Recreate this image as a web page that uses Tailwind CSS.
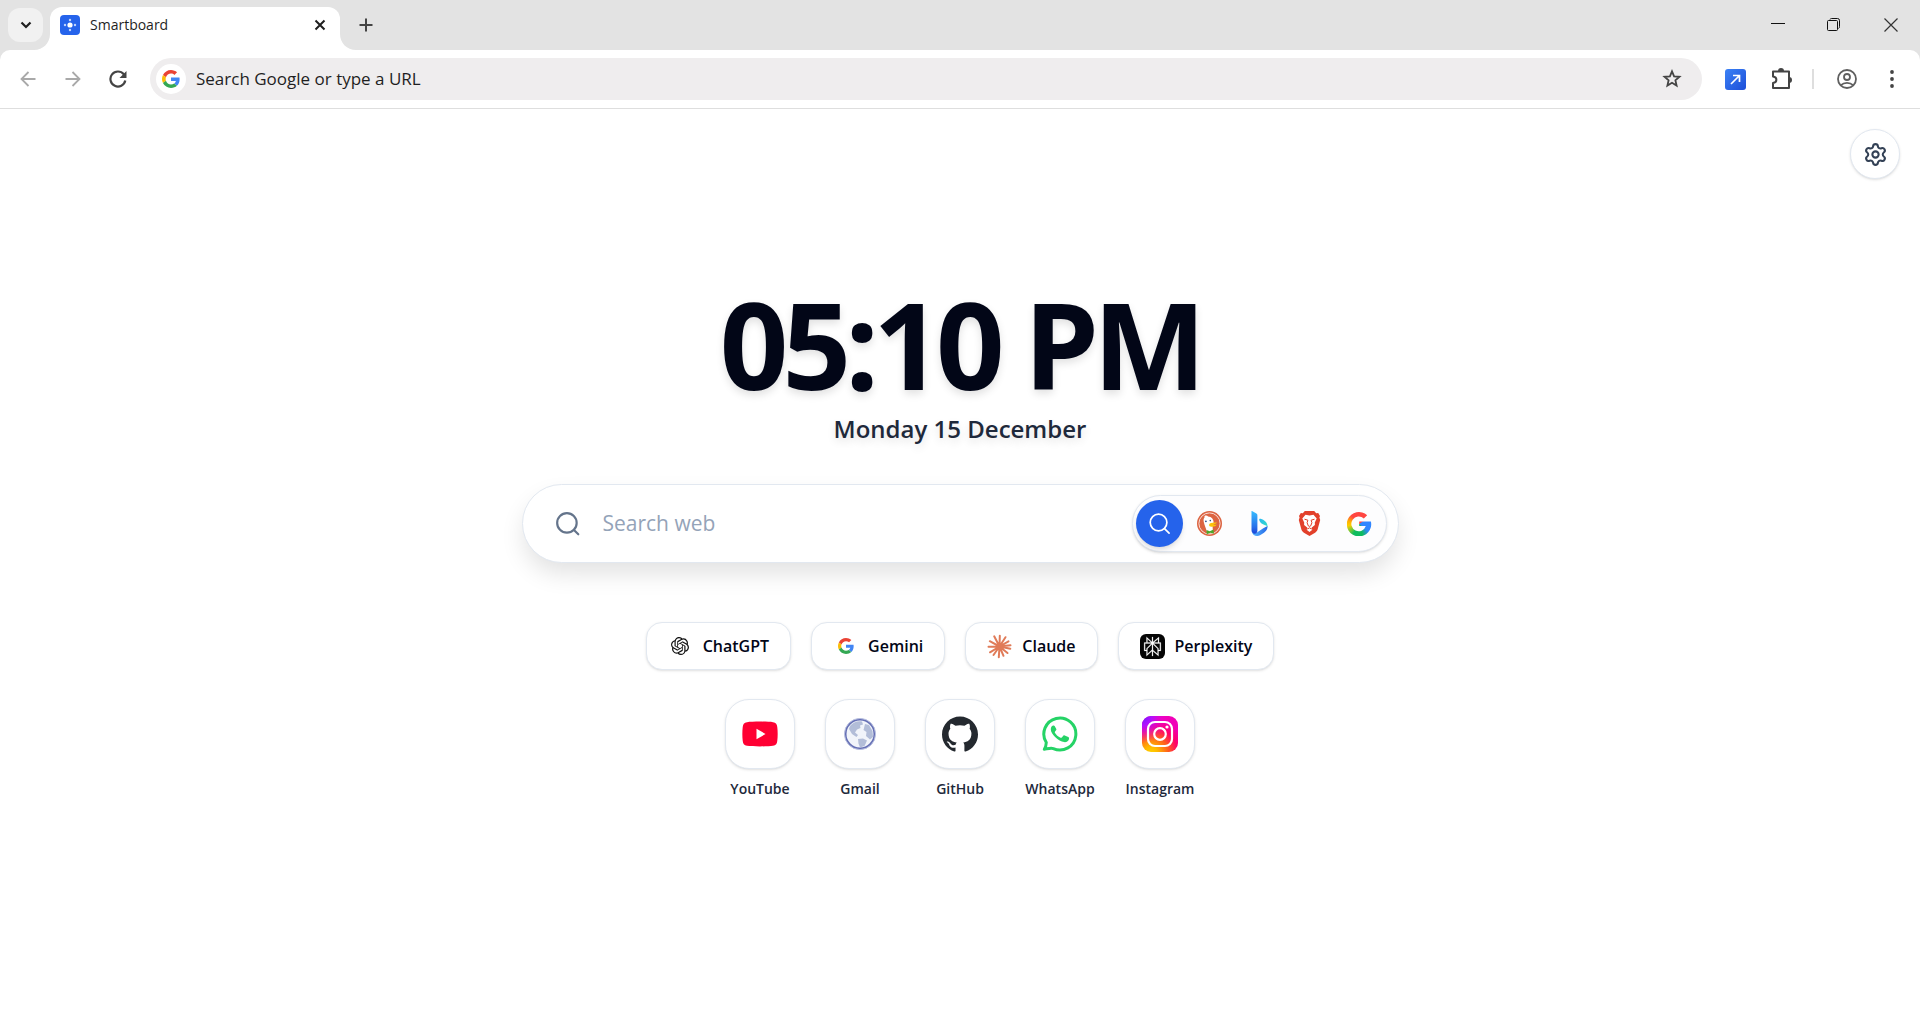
<!DOCTYPE html>
<html lang="en">

<head>
    <meta charset="UTF-8">
    <meta name="viewport" content="width=device-width, initial-scale=1.0">
    <title>Smartboard</title>
    <script src="https://cdn.jsdelivr.net/npm/@tailwindcss/browser@4"></script>
</head>

<body class="bg-white min-h-screen flex flex-col font-['Open_Sans','Noto_Sans',sans-serif]">
    <!-- Shared logo -->
    <svg class="hidden" aria-hidden="true">
        <symbol id="google" viewBox="0 0 48 48">
            <path fill="#EA4335" d="M24 9.5c3.54 0 6.71 1.22 9.21 3.6l6.85-6.85C35.9 2.38 30.47 0 24 0 14.62 0 6.51 5.38 2.56 13.22l7.98 6.19C12.43 13.72 17.74 9.5 24 9.5z" />
            <path fill="#4285F4" d="M46.98 24.55c0-1.57-.15-3.09-.38-4.55H24v9.02h12.94c-.58 2.96-2.26 5.48-4.78 7.18l7.73 6c4.51-4.18 7.09-10.36 7.09-17.65z" />
            <path fill="#FBBC05" d="M10.53 28.59c-.48-1.45-.76-2.99-.76-4.59s.27-3.14.76-4.59l-7.98-6.19C.92 16.46 0 20.12 0 24c0 3.88.92 7.54 2.56 10.78l7.97-6.19z" />
            <path fill="#34A853" d="M24 48c6.48 0 11.93-2.13 15.89-5.81l-7.73-6c-2.15 1.45-4.92 2.3-8.16 2.3-6.26 0-11.57-4.22-13.47-9.91l-7.98 6.19C6.51 42.62 14.62 48 24 48z" />
        </symbol>
    </svg>

    <header class="bg-[#e3e3e3]">
        <!-- Tab strip -->
        <div class="flex items-end h-[50px]">
            <div class="flex items-center h-full pl-2">
                <button aria-label="Search tabs" class="w-[35px] h-[34px] rounded-xl bg-[#f1f1f1] flex items-center justify-center">
                    <svg class="w-3 h-3" viewBox="0 0 12 12" fill="none" stroke="#1f1f1f" stroke-width="2.2"><path d="M1.5 3.5 6 8l4.500-4.500" /></svg>
                </button>
            </div>
            <svg class="w-4 h-4 -ml-[9px]" viewBox="0 0 16 16" fill="#fff"><path d="M16 0v16H0C9 16 16 9 16 0z" /></svg>
            <div class="w-[290px] h-[43px] bg-white rounded-t-xl flex items-center px-[10px] pb-[7px]">
                <svg class="w-5 h-5" viewBox="0 0 20 20">
                    <rect width="20" height="20" rx="4" fill="#2563eb" />
                    <circle cx="10" cy="10" r="2.600" fill="#fff" />
                    <g fill="#bfd3fb"><circle cx="10" cy="5" r="1.200" /><circle cx="10" cy="15" r="1.200" /><circle cx="5" cy="10" r="1.200" /><circle cx="15" cy="10" r="1.200" /></g>
                </svg>
                <span class="ml-[10px] text-sm text-[#1f1f1f]">Smartboard</span>
                <button aria-label="Close tab" class="ml-auto w-5 h-5 flex items-center justify-center">
                    <svg class="w-3 h-3" viewBox="0 0 12 12" fill="none" stroke="#1f1f1f" stroke-width="2"><path d="m1.500 1.500 9 9m0-9-9 9" /></svg>
                </button>
            </div>
            <svg class="w-4 h-4" viewBox="0 0 16 16" fill="#fff"><path d="M0 0v16h16C7 16 0 9 0 0z" /></svg>
            <button aria-label="New tab" class="h-full w-5 flex items-center justify-center">
                <svg class="w-[14px] h-[14px]" viewBox="0 0 14 14" fill="none" stroke="#444" stroke-width="2"><path d="M7 .5v13M.5 7h13" /></svg>
            </button>
            <div class="ml-auto h-full flex items-center">
                <button aria-label="Minimize" class="w-14 h-full flex items-center justify-center">
                    <svg class="w-[14px] h-[14px]" viewBox="0 0 14 14" fill="none" stroke="#111"><path d="M0 5.500h14" /></svg>
                </button>
                <button aria-label="Restore" class="w-14 h-full flex items-center justify-center">
                    <svg class="w-[14px] h-[14px]" viewBox="0 0 14 14" fill="none" stroke="#111"><rect x=".5" y="2.500" width="10" height="10" rx="1" /><path d="M3 1.500Q3.300.5 4.500.5H10.500q2 0 2 2v6q0 1.500-1 2" /></svg>
                </button>
                <button aria-label="Close" class="w-[58px] h-full flex items-center justify-center">
                    <svg class="w-[14px] h-[14px]" viewBox="0 0 14 14" fill="none" stroke="#333" stroke-width="1.200"><path d="m.5.5 13 13m0-13-13 13" /></svg>
                </button>
            </div>
        </div>

        <!-- Toolbar -->
        <div class="bg-white rounded-t-[10px] border-b border-[#dedede] h-[59px] flex items-center px-[18px]">
            <button aria-label="Back" class="w-5 h-5 flex items-center justify-center">
                <svg class="w-4 h-4" viewBox="0 0 16 16" fill="none" stroke="#a9a9a9" stroke-width="1.800"><path d="M15.500 8H2M8.500 1 1.500 8l7 7" /></svg>
            </button>
            <button aria-label="Forward" class="w-5 h-5 ml-[25px] flex items-center justify-center">
                <svg class="w-4 h-4" viewBox="0 0 16 16" fill="none" stroke="#a9a9a9" stroke-width="1.800"><path d="M.5 8H14M7.500 1l7 7-7 7" /></svg>
            </button>
            <button aria-label="Reload" class="w-5 h-5 ml-[25px] flex items-center justify-center">
                <svg class="w-[18px] h-[18px]" viewBox="0 0 18 18" fill="none" stroke="#444" stroke-width="2.200"><path d="M16.300 10.500A7.500 7.500 0 1 1 14.800 4.300l1.500 1.700" /><path d="M17.500 1v7h-7z" fill="#444" stroke="none" /></svg>
            </button>
            <div class="ml-[22px] flex-1 h-[42px] rounded-full bg-[#efedee] flex items-center pl-[6px] pr-5">
                <span class="w-[30px] h-[30px] rounded-full bg-white flex items-center justify-center">
                    <svg class="w-[18px] h-[18px]"><use href="#google" /></svg>
                </span>
                <input type="text" aria-label="Address and search bar" placeholder="Search Google or type a URL"
                    class="ml-[10px] flex-1 bg-transparent outline-none text-[17px] placeholder:text-[#1f1f1f]">
                <button aria-label="Bookmark this tab">
                    <svg class="w-5 h-5 block" viewBox="0 0 20 20" fill="none" stroke="#444" stroke-width="1.800"><path d="m10 2.300 2.100 5 5.400.5-4.100 3.500 1.200 5.300L10 13.800l-4.600 2.800 1.200-5.300L2.500 7.800l5.400-.5z" /></svg>
                </button>
            </div>
            <button aria-label="Open extension" class="ml-[23px]">
                <svg class="w-[21px] h-[21px] block" viewBox="0 0 21 21" fill="none">
                    <defs><linearGradient id="ext" x1="0" y1="0" x2="1" y2="1"><stop stop-color="#3b82f6" /><stop offset="1" stop-color="#1d4ed8" /></linearGradient></defs>
                    <rect width="21" height="21" rx="3" fill="url(#ext)" />
                    <path d="m6 15 8-8M8 6.500h6.500v6.500" stroke="#fff" stroke-width="1.700" />
                </svg>
            </button>
            <button aria-label="Extensions" class="ml-[25px]">
                <svg class="w-[22px] h-[22px] block" viewBox="0 0 22 22" fill="none" stroke="#444" stroke-width="2"><path d="M2 3.500h16v16.500H2v-5c4.500-.5 4.500-6 0-6.500z" stroke-linejoin="round" /><path d="M7 3a3 3 0 0 1 6 0zM18 9a3 3 0 0 1 0 6z" fill="#444" stroke="none" /></svg>
            </button>
            <span class="ml-[19px] w-[2px] h-5 bg-[#dedede]"></span>
            <button aria-label="Profile" class="ml-[23px]">
                <svg class="w-5 h-5 block" viewBox="0 0 20 20" fill="none" stroke="#5f5f5f" stroke-width="1.800"><circle cx="10" cy="10" r="9" /><circle cx="10" cy="8" r="3" /><path d="M4 16.200c3-3 9-3 12 0" /></svg>
            </button>
            <button aria-label="Menu" class="ml-[25px]">
                <svg class="w-5 h-5 block" viewBox="0 0 20 20" fill="#444"><circle cx="10" cy="3" r="1.900" /><circle cx="10" cy="10" r="1.900" /><circle cx="10" cy="17" r="1.900" /></svg>
            </button>
        </div>
    </header>

    <!-- New tab page -->
    <main class="relative flex-1 flex flex-col items-center px-5 pt-[175px] pb-10">
        <button aria-label="Settings"
            class="absolute top-5 right-5 w-[50px] h-[50px] rounded-full border border-slate-200 bg-white shadow-sm flex items-center justify-center">
            <svg class="w-[25px] h-[25px]" viewBox="0 0 24 24" fill="none" stroke="#334155" stroke-width="2" stroke-linecap="round" stroke-linejoin="round">
                <path d="M9.671 4.136a2.340 2.340 0 0 1 4.659 0 2.340 2.340 0 0 0 3.319 1.915 2.340 2.340 0 0 1 2.330 4.033 2.340 2.340 0 0 0 0 3.831 2.340 2.340 0 0 1-2.330 4.033 2.340 2.340 0 0 0-3.319 1.915 2.340 2.340 0 0 1-4.659 0 2.340 2.340 0 0 0-3.320-1.915 2.340 2.340 0 0 1-2.330-4.033 2.340 2.340 0 0 0 0-3.831A2.340 2.340 0 0 1 6.350 6.051a2.340 2.340 0 0 0 3.319-1.915" />
                <circle cx="12" cy="12" r="3" />
            </svg>
        </button>

        <!-- Clock -->
        <h1 class="text-[120px] leading-[120px] font-bold tracking-tighter text-[#020617] [text-shadow:0_4px_8px_rgb(0_0_0/0.12)]">05:10 PM</h1>
        <p class="mt-[7px] text-2xl leading-9 font-semibold text-[#1e293b] [text-shadow:0_4px_8px_rgb(0_0_0/0.12)]">Monday 15 December</p>

        <!-- Search -->
        <form role="search" class="mt-[37px] w-full max-w-[877px] h-[79px] rounded-full border border-slate-200 bg-white shadow-[0_12px_24px_-2px_rgb(0_0_0/0.12)] flex items-center pl-8 pr-[11px]">
            <svg class="w-[26px] h-[26px]" viewBox="0 0 24 24" fill="none" stroke="#64748b" stroke-width="2" stroke-linecap="round"><circle cx="11" cy="11" r="9" /><path d="m21.500 21.500-4-4" /></svg>
            <input type="text" aria-label="Search web" placeholder="Search web"
                class="ml-[22px] flex-1 min-w-0 bg-transparent outline-none text-[21px] placeholder:text-[#94a3b8]">
            <div class="h-[57px] rounded-full border border-slate-200 bg-[#fdfdfe] shadow-sm flex items-center gap-[3px] px-[3px]">
                <button type="button" aria-label="Default search" class="w-[47px] h-[47px] rounded-full bg-[#2563eb] shadow-md flex items-center justify-center">
                    <svg class="w-[23px] h-[23px]" viewBox="0 0 24 24" fill="none" stroke="#fff" stroke-width="1.800" stroke-linecap="round"><circle cx="11" cy="11" r="8.700" /><path d="m22 22-4.500-4.500" /></svg>
                </button>
                <button type="button" aria-label="DuckDuckGo" class="w-[47px] h-[47px] rounded-full flex items-center justify-center">
                    <svg class="w-[25px] h-[25px]" viewBox="0 0 25 25">
                        <circle cx="12.500" cy="12.500" r="12.500" fill="#dc6442" />
                        <circle cx="12.500" cy="12.500" r="10.600" fill="none" stroke="#fbe9e4" stroke-width=".9" />
                        <path fill="#fff" d="M7.500 5c1.500-.8 2.800-.3 3.600.4 3.600.3 5.300 2.300 5.500 5.600.1 1.600-.8 3-1 4.500l.4 6.300c-1.600.7-3.500 1-5.400.7L7.800 14.500C6.800 11 5.800 8.500 7.500 6.500z" />
                        <path fill="#fdc20a" d="M12.500 12.700c1.700-1.500 4.300-1.200 7.500-1.300-.4 1.300-2.500 1.600-4 2.100 1.300.5 2.500.3 3.600.1-.4 2-4 2.600-6.300 2-1.200-.5-1.500-1.800-.8-2.900z" />
                        <path fill="#4ca82c" d="m9.500 19 3.300 1.200 3.700-1.700.4 4.200-3.500-1-3.700 1.500z" />
                        <circle cx="8.900" cy="10.300" r=".9" fill="#2d4f8e" /><circle cx="13.300" cy="9.600" r=".8" fill="#2d4f8e" />
                    </svg>
                </button>
                <button type="button" aria-label="Bing" class="w-[47px] h-[47px] rounded-full flex items-center justify-center">
                    <svg class="w-[25px] h-[25px]" viewBox="0 0 25 25">
                        <defs>
                            <linearGradient id="b1" x1="0" y1="0" x2="0" y2="1"><stop stop-color="#37bdff" /><stop offset=".7" stop-color="#2870ea" /><stop offset="1" stop-color="#1b44d8" /></linearGradient>
                            <linearGradient id="b2" x1="0" y1="0" x2="1" y2="1"><stop stop-color="#26b8f4" /><stop offset="1" stop-color="#36e0c0" /></linearGradient>
                            <linearGradient id="b3" x1="0" y1="0" x2="1" y2="0"><stop stop-color="#58b8ff" /><stop offset="1" stop-color="#2468e8" /></linearGradient>
                        </defs>
                        <path fill="url(#b3)" d="M20.500 15c.4 3-1.500 5.300-3.500 6.700l-4 2.500c-3 1.700-7.500.5-8.200-3.500 1.500 2 4 1.500 5.500.5l6-4z" />
                        <path fill="url(#b2)" d="M12.300 9.200c-.5-1.500.8-1.700 2-1.200 3.800 1.500 6.700 4 6.200 8.300-.3-1.600-2-2-3.500-2.500l-2-1c-1-.6-2-2-2.700-3.600z" />
                        <path fill="url(#b1)" d="M4.500.3c-.2-.2.1-.4.500-.2l4 2.200c1 .5 1.400 1 1.400 2.200v15.200c0 4-5.900 4-5.900-.5z" />
                    </svg>
                </button>
                <button type="button" aria-label="Brave" class="w-[47px] h-[47px] rounded-full flex items-center justify-center">
                    <svg class="w-[25px] h-[25px]" viewBox="0 0 25 25">
                        <path fill="#e2402b" d="M7.800 0h9.400l2 2.200 2-.2 1.800 3-.6 1.500.8 2.500-2.600 9.500c-.5 1.500-1.300 2.300-2.500 3.200L12.500 25l-5.600-3.300c-1.200-.9-2-1.700-2.500-3.200L1.800 9l.8-2.500L2 5l1.800-3 2 .2z" />
                        <path fill="#fff" d="m8.500 3.700 4 .8 4-.8 3.200 3.800-1.900 4 .1 2.500-3.100 2.500-.4 1.200 1 1-2.900 2.300-2.900-2.300 1-1-.4-1.200L7.100 14l.1-2.500-1.900-4z" />
                        <path fill="none" stroke="#e2402b" d="m7.500 8.200 3.400 1-.8 2.500 1.200 3.200 1.200.5 1.200-.5 1.200-3.200-.8-2.500 3.400-1M10.500 18l2-1.200 2 1.200" />
                    </svg>
                </button>
                <button type="button" aria-label="Google" class="w-[47px] h-[47px] rounded-full flex items-center justify-center">
                    <span class="w-[25px] h-[25px] bg-[conic-gradient(from_0deg,#ff4641_0deg,#ff4641_50deg,#3186ff_70deg,#3186ff_130deg,#0ebc5f_165deg,#0ebc5f_210deg,#86c930_235deg,#ffcc00_260deg,#ffb400_280deg,#ff4641_315deg,#ff4641_360deg)] [clip-path:path('M20.7_4.2A12.200_12.200_0_1_0_24.400_10.500H12.700V15.100H19.300A7.400_7.400_0_1_1_17.300_7.500Z')]"></span>
                </button>
            </div>
        </form>

        <!-- AI tools -->
        <nav aria-label="AI tools" class="mt-[59px] flex flex-wrap justify-center gap-5">
            <a href="#chatgpt" class="h-12 px-[21px] rounded-2xl border border-slate-200 bg-white shadow-sm flex items-center gap-[10px] text-base font-semibold text-[#020617]">
                <span class="w-[25px] flex justify-center">
                    <svg class="w-[18px] h-[18px]" viewBox="0 0 24 24" fill="#111"><path d="M22.282 9.821a5.985 5.985 0 0 0-.516-4.910 6.046 6.046 0 0 0-6.510-2.900A6.065 6.065 0 0 0 4.981 4.180a5.985 5.985 0 0 0-3.998 2.900 6.046 6.046 0 0 0 .743 7.097 5.980 5.980 0 0 0 .510 4.911 6.051 6.051 0 0 0 6.515 2.900A5.985 5.985 0 0 0 13.260 24a6.056 6.056 0 0 0 5.772-4.206 5.990 5.990 0 0 0 3.997-2.900 6.056 6.056 0 0 0-.747-7.073zM13.260 22.430a4.476 4.476 0 0 1-2.876-1.040l.141-.081 4.779-2.758a.795.795 0 0 0 .392-.681v-6.737l2.020 1.168a.071.071 0 0 1 .038.052v5.583a4.504 4.504 0 0 1-4.494 4.494zM3.600 18.304a4.470 4.470 0 0 1-.535-3.014l.142.085 4.783 2.759a.771.771 0 0 0 .780 0l5.843-3.369v2.332a.080.080 0 0 1-.033.062L9.740 19.950a4.500 4.500 0 0 1-6.140-1.646zM2.340 7.896a4.485 4.485 0 0 1 2.366-1.973V11.600a.766.766 0 0 0 .388.677l5.815 3.354-2.020 1.168a.076.076 0 0 1-.071 0l-4.830-2.786A4.504 4.504 0 0 1 2.340 7.872zm16.597 3.855l-5.833-3.387L15.119 7.200a.076.076 0 0 1 .071 0l4.830 2.791a4.494 4.494 0 0 1-.676 8.105v-5.678a.790.790 0 0 0-.407-.667zm2.010-3.023l-.141-.085-4.774-2.782a.776.776 0 0 0-.785 0L9.409 9.230V6.897a.066.066 0 0 1 .028-.061l4.830-2.787a4.500 4.500 0 0 1 6.680 4.660zm-12.640 4.135l-2.020-1.164a.080.080 0 0 1-.038-.057V6.075a4.500 4.500 0 0 1 7.375-3.453l-.142.080L8.704 5.460a.795.795 0 0 0-.393.681zm1.097-2.365l2.602-1.500 2.607 1.500v2.999l-2.597 1.500-2.607-1.500z" /></svg>
                </span>
                ChatGPT
            </a>
            <a href="#gemini" class="h-12 px-[21px] rounded-2xl border border-slate-200 bg-white shadow-sm flex items-center gap-[10px] text-base font-semibold text-[#020617]">
                <span class="w-[25px] flex justify-center">
                    <svg class="w-4 h-4"><use href="#google" /></svg>
                </span>
                Gemini
            </a>
            <a href="#claude" class="h-12 px-[21px] rounded-2xl border border-slate-200 bg-white shadow-sm flex items-center gap-[10px] text-base font-semibold text-[#020617]">
                <svg class="w-[25px] h-[25px]" viewBox="0 0 25 25" fill="none" stroke="#e07b58" stroke-width="2" stroke-linecap="round">
                    <path d="M12.500 12.500 12.800 1.800M12.500 12.500 18.500 3.200M12.500 12.500 21.500 7.300M12.500 12.500 23.500 11.300M12.500 12.500 23.300 14.800M12.500 12.500 20.500 19M12.500 12.500 16.500 21.800M12.500 12.500 11.800 23.300M12.500 12.500 6.500 21M12.500 12.500 3 18.300M12.500 12.500 1.500 12.700M12.500 12.500 2.800 7.200M12.500 12.500 7.200 2.300" />
                    <circle cx="12.500" cy="12.500" r="2.500" fill="#e07b58" />
                </svg>
                Claude
            </a>
            <a href="#perplexity" class="h-12 px-[21px] rounded-2xl border border-slate-200 bg-white shadow-sm flex items-center gap-[10px] text-base font-semibold text-[#020617]">
                <svg class="w-[25px] h-[25px]" viewBox="0 0 25 25">
                    <rect width="25" height="25" rx="6" fill="#050505" />
                    <g transform="translate(2.900 2.900) scale(.8)" fill="#fff" stroke="#fff" stroke-width=".3"><path d="M22.398 7.090h-2.311V.068l-7.509 6.354V.158h-1.156v6.196L4.490 0v7.090H1.602v10.397H4.490V24l6.932-6.359v6.200h1.156v-6.047l6.931 6.181v-6.488h2.889V7.090zm-3.466-4.531v4.531h-5.355l5.355-4.531zm-13.286.067 4.869 4.464H5.646V2.626zM2.758 16.332V8.245h7.847L4.490 14.360v1.972H2.758zm2.888 5.040v-6.534l5.776-5.776v7.011l-5.776 5.299zm12.708.025-5.776-5.151V9.062l5.776 5.776v6.559zm2.889-5.065h-1.733V14.360l-6.115-6.115h7.848v8.087z" /></g>
                </svg>
                Perplexity
            </a>
        </nav>

        <!-- Shortcuts -->
        <nav aria-label="Shortcuts" class="mt-[29px] flex flex-wrap justify-center gap-[30px]">
            <a href="#youtube" class="w-[70px] flex flex-col items-center gap-[10px] text-sm text-[#1e293b] font-semibold">
                <span class="w-[70px] h-[70px] rounded-3xl border border-slate-200 bg-white shadow-sm flex items-center justify-center">
                    <svg class="w-9 h-9" viewBox="0 0 36 36"><path fill="#ff0033" d="M5 6.200c5-.8 21-.8 26 0 3 .4 4 2 4.300 5 .5 4 .5 9.600 0 13.600-.3 3-1.300 4.600-4.300 5-5 .8-21 .8-26 0-3-.4-4-2-4.300-5-.5-4-.5-9.600 0-13.600.3-3 1.300-4.600 4.300-5z" /><path fill="#fff" d="M14.500 12.700v10.600l9-5.300z" /></svg>
                </span>
                YouTube
            </a>
            <a href="#gmail" class="w-[70px] flex flex-col items-center gap-[10px] text-sm text-[#1e293b] font-semibold">
                <span class="w-[70px] h-[70px] rounded-3xl border border-slate-200 bg-white shadow-sm flex items-center justify-center">
                    <svg class="w-8 h-8" viewBox="0 0 32 32">
                        <circle cx="16" cy="16" r="14.500" fill="#f1f4fa" stroke="#6670b5" stroke-width="2" />
                        <circle cx="16" cy="16" r="15.600" fill="none" stroke="#b9c0e0" />
                        <g fill="#b2bdd8"><path d="M6 8c3-4 8-5.500 12-4.500l1 3-3 1 .5 2.500-3.500 1.500-2 3 3 2.500-1.500 2-4.500-3L5 11z" /><path d="m21 6 4 1 3.500 6 .5 6-3 2.500-4-3.500.5-4-3-2z" /><path d="m14 21 5-.5 4 2-2.500 5.500-4.500 1.500-1.500-4z" /></g>
                    </svg>
                </span>
                Gmail
            </a>
            <a href="#github" class="w-[70px] flex flex-col items-center gap-[10px] text-sm text-[#1e293b] font-semibold">
                <span class="w-[70px] h-[70px] rounded-3xl border border-slate-200 bg-white shadow-sm flex items-center justify-center">
                    <svg class="w-9 h-9" viewBox="0 0 24 24" fill="#24292f"><path d="M12 .297c-6.630 0-12 5.373-12 12 0 5.303 3.438 9.800 8.205 11.385.6.113.82-.258.82-.577 0-.285-.010-1.040-.015-2.040-3.338.724-4.042-1.610-4.042-1.610C4.422 18.070 3.633 17.700 3.633 17.700c-1.087-.744.084-.729.084-.729 1.205.084 1.838 1.236 1.838 1.236 1.070 1.835 2.809 1.305 3.495.998.108-.776.417-1.305.760-1.605-2.665-.3-5.466-1.332-5.466-5.930 0-1.310.465-2.380 1.235-3.220-.135-.303-.540-1.523.105-3.176 0 0 1.005-.322 3.300 1.230.960-.267 1.980-.399 3-.405 1.020.006 2.040.138 3 .405 2.280-1.552 3.285-1.230 3.285-1.230.645 1.653.240 2.873.120 3.176.765.840 1.230 1.910 1.230 3.220 0 4.610-2.805 5.625-5.475 5.920.420.360.810 1.096.810 2.220 0 1.606-.015 2.896-.015 3.286 0 .315.210.690.825.570C20.565 22.092 24 17.592 24 12.297c0-6.627-5.373-12-12-12" /></svg>
                </span>
                GitHub
            </a>
            <a href="#whatsapp" class="w-[70px] flex flex-col items-center gap-[10px] text-sm text-[#1e293b] font-semibold">
                <span class="w-[70px] h-[70px] rounded-3xl border border-slate-200 bg-white shadow-sm flex items-center justify-center">
                    <svg class="w-9 h-9" viewBox="0 0 36 36" fill="none">
                        <path stroke="#25d366" stroke-width="3" stroke-linejoin="round" d="M2.300 33.200c1.300-2 1.900-4.300 2-6.700A16 16 0 1 1 11.300 32.600c-2.200-.9-6 .2-9 .6z" />
                        <path fill="#25d366" d="M12.800 10.200c-.3-.7-.7-.8-1.300-.8-1.500 0-2.700 1.700-2.700 3.900 0 2.500 1.700 5.200 4.300 7.800 3 3 6 4.500 9 5 2.500.3 4.600-1.400 4.900-3.200.1-1.200-.1-1.500-.7-1.900l-3.600-1.500c-.7-.3-1-.2-1.400.3l-1.500 1.700c-.4.4-.7.5-1.300.2-2.400-1-4.300-2.700-5.600-5-.3-.5-.1-.8.2-1.200l1.100-1.400c.3-.4.3-.8.1-1.200z" />
                    </svg>
                </span>
                WhatsApp
            </a>
            <a href="#instagram" class="w-[70px] flex flex-col items-center gap-[10px] text-sm text-[#1e293b] font-semibold">
                <span class="w-[70px] h-[70px] rounded-3xl border border-slate-200 bg-white shadow-sm flex items-center justify-center">
                    <svg class="w-9 h-9" viewBox="0 0 36 36">
                        <defs>
                            <radialGradient id="ig1" cx=".25" cy="1.050" r="1"><stop stop-color="#ffd600" /><stop offset=".2" stop-color="#ffb800" /><stop offset=".5" stop-color="#ff5a1f" /><stop offset=".75" stop-color="#ff0169" /><stop offset="1" stop-color="#f000b8" /></radialGradient>
                            <radialGradient id="ig2" cx="0" cy="0" r=".75"><stop stop-color="#6a1bff" /><stop offset=".35" stop-color="#b010ff" /><stop offset="1" stop-color="#ff00c8" stop-opacity="0" /></radialGradient>
                        </defs>
                        <rect width="36" height="36" rx="9" fill="url(#ig1)" /><rect width="36" height="36" rx="9" fill="url(#ig2)" />
                        <rect x="6" y="6" width="24" height="24" rx="7" fill="none" stroke="#fff" stroke-width="2.200" />
                        <circle cx="18" cy="18" r="5.800" fill="none" stroke="#fff" stroke-width="2.200" /><circle cx="25" cy="11" r="1.600" fill="#fff" />
                    </svg>
                </span>
                Instagram
            </a>
        </nav>
    </main>
</body>

</html>
